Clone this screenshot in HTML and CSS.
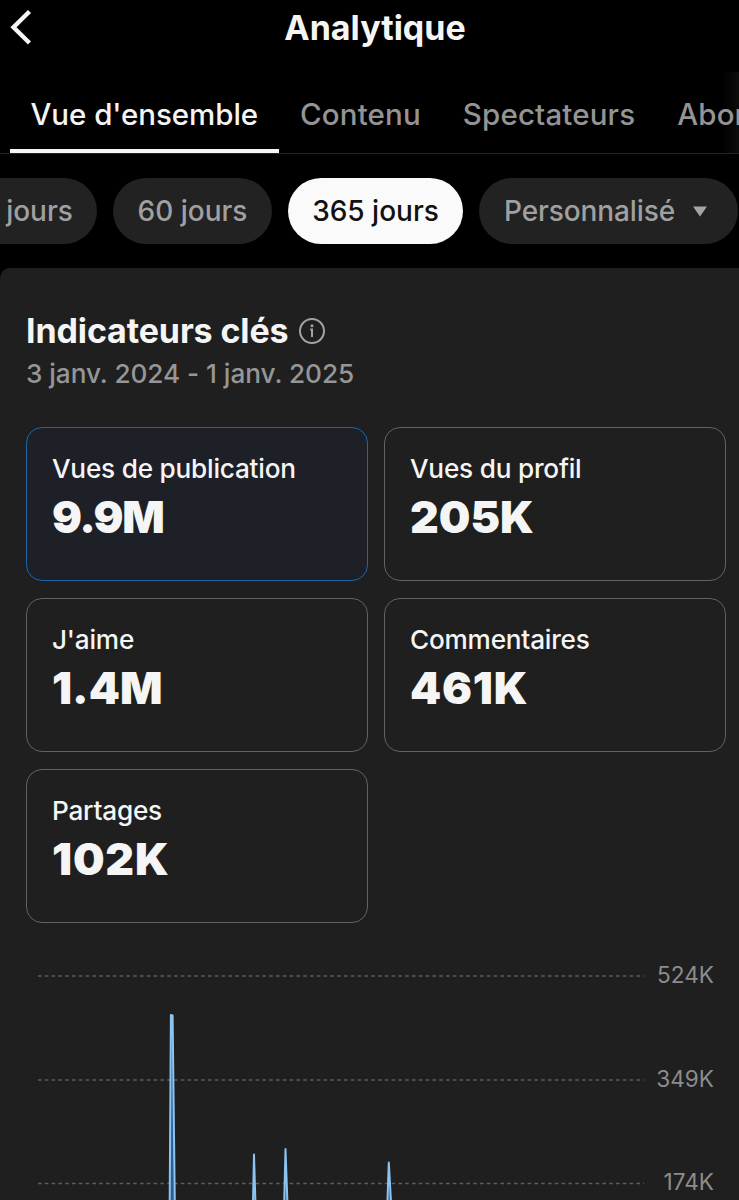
FILE: index.html
```html
<!DOCTYPE html>
<html lang="fr">
<head>
    <meta charset="UTF-8">
    <meta name="viewport" content="width=device-width, initial-scale=1.0">
    <title>Analytique</title>
    <link rel="stylesheet" href="styles.css">
</head>
<body>

    <header class="topbar">
        <svg class="back" width="24" height="38" viewBox="0 0 24 38">
            <path d="M20.5 2.5L4.5 18.3L20.5 34" fill="none" stroke="#f5f5f5" stroke-width="4.4"/>
        </svg>
        <h1>Analytique</h1>
    </header>

    <nav class="tabs">
        <a class="tab active">Vue d'ensemble</a>
        <a class="tab">Contenu</a>
        <a class="tab">Spectateurs</a>
        <a class="tab">Abonnés</a>
    </nav>

    <div class="chips">
        <button class="chip cut">jours</button>
        <button class="chip sixty">60 jours</button>
        <button class="chip selected">365 jours</button>
        <button class="chip custom">Personnalisé
            <svg width="14" height="11" viewBox="0 0 14 11"><path d="M0 0.5H14L7 10.5Z" fill="#a5a5a5"/></svg>
        </button>
    </div>

    <main class="panel">
        <div class="heading">
            <h2>Indicateurs clés</h2>
            <svg width="28" height="28" viewBox="0 0 28 28">
                <circle cx="14" cy="14" r="12" fill="none" stroke="#a3a3a3" stroke-width="2"/>
                <circle cx="14" cy="8.7" r="1.5" fill="#a3a3a3"/>
                <path d="M12.2 12.5H14V20" fill="none" stroke="#a3a3a3" stroke-width="2"/>
            </svg>
        </div>
        <p class="dates">3 janv. 2024 - 1 janv. 2025</p>

        <section class="cards">
            <div class="card current">
                <span class="label">Vues de publication</span>
                <span class="value tight">9.9M</span>
            </div>
            <div class="card">
                <span class="label">Vues du profil</span>
                <span class="value">205K</span>
            </div>
            <div class="card">
                <span class="label">J'aime</span>
                <span class="value">1.4M</span>
            </div>
            <div class="card">
                <span class="label">Commentaires</span>
                <span class="value wide">461K</span>
            </div>
            <div class="card">
                <span class="label">Partages</span>
                <span class="value wide">102K</span>
            </div>
        </section>

        <section class="chart">
            <svg class="plot" width="606" height="239" viewBox="0 0 606 239">
                <g stroke="#5c5c5c" stroke-width="1.5" stroke-dasharray="3.6 3.2">
                    <path d="M0 15H606"/>
                    <path d="M0 119H606"/>
                    <path d="M0 222.5H606"/>
                </g>
                <!-- daily views, cut off by the bottom of the screen -->
                <g fill="#2d5f91" stroke="#8cc3f0" stroke-width="2" stroke-linejoin="round">
                    <path d="M131.7 241L132.9 54L134.6 54.5L136.8 241"/>
                    <path d="M215 241L216 193.5L217.4 241"/>
                    <path d="M246.2 241L247.5 188L249.4 241"/>
                    <path d="M349.4 241L350.8 201.5L353 241"/>
                </g>
            </svg>
            <div class="axis">
                <span>524K</span>
                <span>349K</span>
                <span>174K</span>
            </div>
        </section>
    </main>

</body>
</html>
```
FILE: styles.css
```css
* {
    box-sizing: border-box;
}
body {
    margin: 0;
    height: 1200px;
    background-color: #000;
    color: #f5f5f5;
    font-family: Inter, 'Liberation Sans', sans-serif;
    overflow: hidden;
    display: flex;
    flex-direction: column;
}
h1, h2, p {
    margin: 0;
}

/* Title bar */
.topbar {
    display: flex;
    align-items: center;
    height: 72px;
    padding: 0 0 17px 9px;
    flex: none;
}
.topbar h1 {
    flex: 1;
    text-align: center;
    padding-right: 22px;
    font-size: 34px;
    line-height: 40px;
    font-weight: 700;
}

/* Tabs */
.tabs {
    display: flex;
    flex: none;
    height: 82px;
    padding-left: 10px;
    border-bottom: 1px solid #242424;
    background: linear-gradient(to left, #0c0c0c, #000 18px);
    white-space: nowrap;
    overflow: hidden;
}
.tab {
    flex: none;
    padding: 24px 21px 0;
    font-size: 29.5px;
    line-height: 36px;
    font-weight: 500;
    letter-spacing: 0.15px;
    color: #949494;
}
.tab.active {
    width: 269px;
    padding: 24px 0 0 20.5px;
    letter-spacing: -0.05px;
    color: #f5f5f5;
    border-bottom: 4px solid #f5f5f5;
}

/* Period filters */
.chips {
    display: flex;
    flex: none;
    gap: 16px;
    height: 114px;
    padding-top: 24px;
}
.chip {
    flex: none;
    display: flex;
    align-items: center;
    justify-content: center;
    height: 66px;
    padding: 0;
    border: none;
    border-radius: 33px;
    background-color: #222;
    color: #a0a0a0;
    font-family: inherit;
    font-size: 28px;
    font-weight: 500;
}
.chip.cut {
    width: 97px;
    padding-right: 18px;
    border-radius: 0 33px 33px 0;
}
.chip.sixty {
    width: 159px;
}
.chip.selected {
    width: 175px;
    background-color: #fafafa;
    color: #111;
}
.chip.custom {
    width: 259px;
    gap: 18px;
    padding-right: 6px;
    letter-spacing: -0.1px;
}

/* Key metrics */
.panel {
    flex: 1;
    background-color: #1f1f1f;
    border-radius: 10px 0 0 0;
    padding: 43px 13px 0 26px;
}
.heading {
    display: flex;
    align-items: center;
    gap: 9px;
    height: 40px;
}
.heading h2 {
    font-size: 34px;
    line-height: 40px;
    font-weight: 700;
    letter-spacing: -0.12px;
}
.dates {
    margin-top: 7px;
    font-size: 26.2px;
    line-height: 32px;
    font-weight: 500;
    letter-spacing: -0.05px;
    color: #969696;
}
.cards {
    display: grid;
    grid-template-columns: 342px 342px;
    grid-auto-rows: 154px;
    gap: 17px 16px;
    margin-top: 37px;
}
.card {
    display: flex;
    flex-direction: column;
    padding: 24px 25px;
    border: 1px solid #626262;
    border-radius: 16px;
}
.card.current {
    background-color: #1e2028;
    border-color: #1f65ad;
}
.label {
    font-size: 26.2px;
    line-height: 33px;
    font-weight: 500;
    letter-spacing: -0.22px;
}
.value {
    margin-top: 5px;
    font-size: 44.5px;
    line-height: 54px;
    font-weight: 900;
}
.card .value.tight {
    letter-spacing: -1.4px;
}
.value.wide {
    letter-spacing: 0.8px;
}

/* Chart */
.chart {
    display: flex;
    margin: 38px 0 0 12px;
    height: 239px;
    overflow: hidden;
}
.plot {
    flex: none;
}
.axis {
    width: 70px;
    text-align: right;
    color: #8c8c8c;
    font-size: 22.6px;
}
.axis span {
    display: block;
    height: 103.7px;
    line-height: 27px;
}
```
